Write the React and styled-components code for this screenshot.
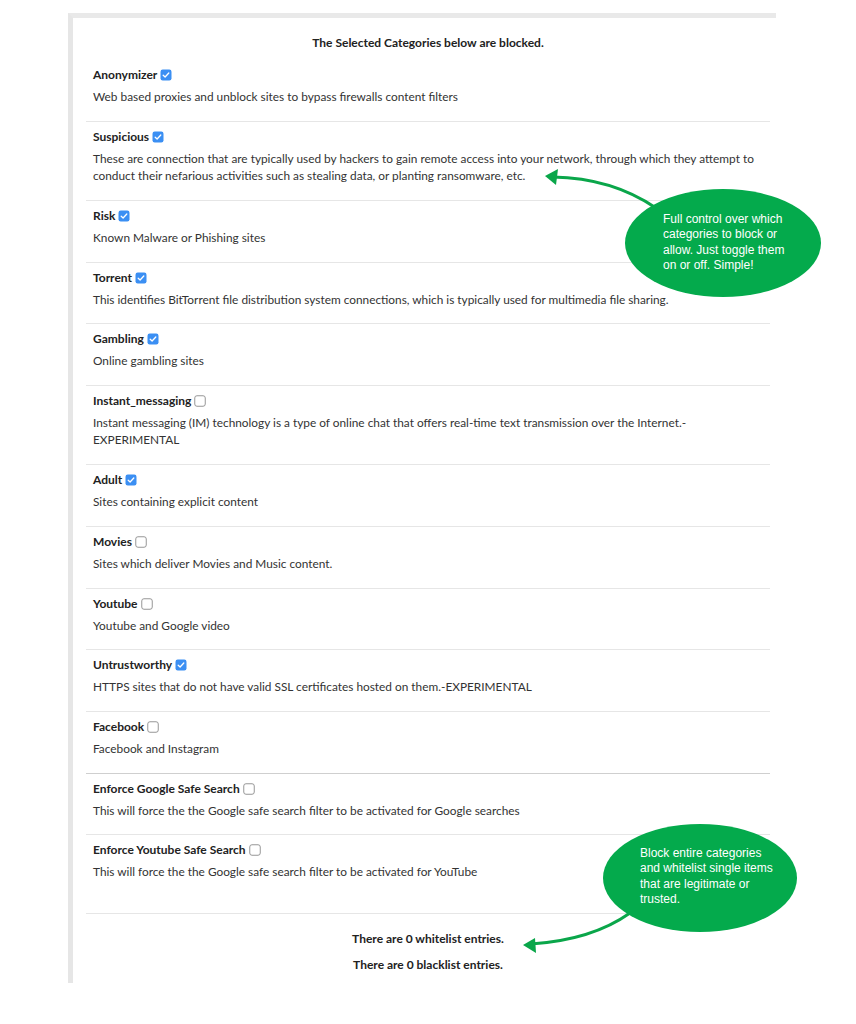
import React from "react";
import styled, { createGlobalStyle } from "styled-components";

const GlobalStyle = createGlobalStyle`
  body {
    margin: 0;
    background: #ffffff;
    font-family: Lato, "Noto Sans", sans-serif;
    color: #333;
  }
`;

const Page = styled.div`
  position: relative;
  width: 856px;
  height: 1024px;
  overflow: hidden;
`;

const Panel = styled.div`
  margin: 13px 0 0 68px;
  width: 703px;
  height: 965px;
  border-top: 5px solid #e9e9e9;
  border-left: 5px solid #e6e6e6;
  background: #fff;
`;

const Heading = styled.div`
  margin: 15px 6px 7px 13px;
  text-align: center;
  font-weight: 700;
  font-size: 12px;
  line-height: 20px;
  color: #222;
`;

const List = styled.div`
  margin: 0 6px 0 13px;
`;

const Row = styled.div`
  padding: 5px 7px ${(p) => p.$bottom || 15.2}px;
  border-bottom: 1px solid ${(p) => (p.$strong ? "#cfcfcf" : "#e6e6e6")};
`;

const TitleLine = styled.div`
  display: flex;
  align-items: center;
  gap: 3px;
  font-weight: 700;
  font-size: 12px;
  line-height: 20px;
  color: #222;
`;

const Desc = styled.div`
  margin-top: 3px;
  font-size: 11.85px;
  line-height: 17.5px;
  color: #333;
`;

const Summary = styled.div`
  text-align: center;
  font-weight: 700;
  font-size: 12px;
  line-height: 20px;
  color: #222;
  margin-top: ${(p) => p.$top}px;
`;

const Bubble = styled.div`
  position: absolute;
  left: ${(p) => p.$x}px;
  top: ${(p) => p.$y}px;
  width: ${(p) => p.$w}px;
  height: ${(p) => p.$h}px;
  box-sizing: border-box;
  padding: ${(p) => p.$pt}px ${(p) => p.$pr}px 0 ${(p) => p.$pl}px;
  border-radius: 50%;
  background: #04aa4c;
  color: #fff;
  font-family: "Liberation Sans", Arial, sans-serif;
  font-size: 12px;
  line-height: 15.3px;
`;

const Overlay = styled.svg`
  position: absolute;
  left: 0;
  top: 0;
  pointer-events: none;
`;

function Checkbox({ checked }) {
  return (
    <svg width="12" height="12" viewBox="0 0 12 12">
      {checked ? (
        <>
          <rect x="0.5" y="0.5" width="11" height="11" rx="2.2" fill="#3b8ff3" />
          <path d="M3.2 6.2 L5.1 8 L8.8 4" fill="none" stroke="#fff" strokeWidth="1.3" strokeLinecap="round" strokeLinejoin="round" />
        </>
      ) : (
        <rect x="0.75" y="0.75" width="10.5" height="10.5" rx="2.2" fill="#fff" stroke="#8a8a8a" strokeWidth="0.9" />
      )}
    </svg>
  );
}

const categories = [
  { name: "Anonymizer", checked: true, desc: "Web based proxies and unblock sites to bypass firewalls content filters" },
  {
    name: "Suspicious",
    checked: true,
    desc: "These are connection that are typically used by hackers to gain remote access into your network, through which they attempt to conduct their nefarious activities such as stealing data, or planting ransomware, etc.",
  },
  { name: "Risk", checked: true, desc: "Known Malware or Phishing sites" },
  {
    name: "Torrent",
    checked: true,
    desc: "This identifies BitTorrent file distribution system connections, which is typically used for multimedia file sharing.",
  },
  { name: "Gambling", checked: true, desc: "Online gambling sites" },
  {
    name: "Instant_messaging",
    checked: false,
    desc: "Instant messaging (IM) technology is a type of online chat that offers real-time text transmission over the Internet.- EXPERIMENTAL",
  },
  { name: "Adult", checked: true, desc: "Sites containing explicit content" },
  { name: "Movies", checked: false, desc: "Sites which deliver Movies and Music content." },
  { name: "Youtube", checked: false, desc: "Youtube and Google video" },
  { name: "Untrustworthy", checked: true, desc: "HTTPS sites that do not have valid SSL certificates hosted on them.-EXPERIMENTAL" },
  { name: "Facebook", checked: false, desc: "Facebook and Instagram", strong: true },
  {
    name: "Enforce Google Safe Search",
    checked: false,
    desc: "This will force the the Google safe search filter to be activated for Google searches",
  },
  {
    name: "Enforce Youtube Safe Search",
    checked: false,
    desc: "This will force the the Google safe search filter to be activated for YouTube",
    bottom: 32,
  },
];

export default function App() {
  return (
    <Page>
      <GlobalStyle />
      <Panel>
        <Heading>The Selected Categories below are blocked.</Heading>
        <List>
          {categories.map((c) => (
            <Row key={c.name} $strong={c.strong} $bottom={c.bottom}>
              <TitleLine>
                {c.name}
                <Checkbox checked={c.checked} />
              </TitleLine>
              <Desc>{c.desc}</Desc>
            </Row>
          ))}
          <Summary $top={15}>There are 0 whitelist entries.</Summary>
          <Summary $top={6}>There are 0 blacklist entries.</Summary>
        </List>
      </Panel>

      <Overlay width="856" height="1024" viewBox="0 0 856 1024">
        <path d="M656 208 Q612 178 553 177" fill="none" stroke="#0aa64a" strokeWidth="3" />
        <polygon points="545,176 558,169 556,185" fill="#0aa64a" />
        <path d="M630 913 Q592 940 531 944" fill="none" stroke="#0aa64a" strokeWidth="3" />
        <polygon points="523,945 535,938 536,953" fill="#0aa64a" />
      </Overlay>

      <Bubble $x={625} $y={189} $w={196} $h={108} $pt={23} $pl={38} $pr={28}>
        Full control over which categories to block or allow. Just toggle them on or off. Simple!
      </Bubble>
      <Bubble $x={603} $y={824} $w={194} $h={108} $pt={22} $pl={37} $pr={18}>
        Block entire categories and whitelist single items that are legitimate or trusted.
      </Bubble>
    </Page>
  );
}
